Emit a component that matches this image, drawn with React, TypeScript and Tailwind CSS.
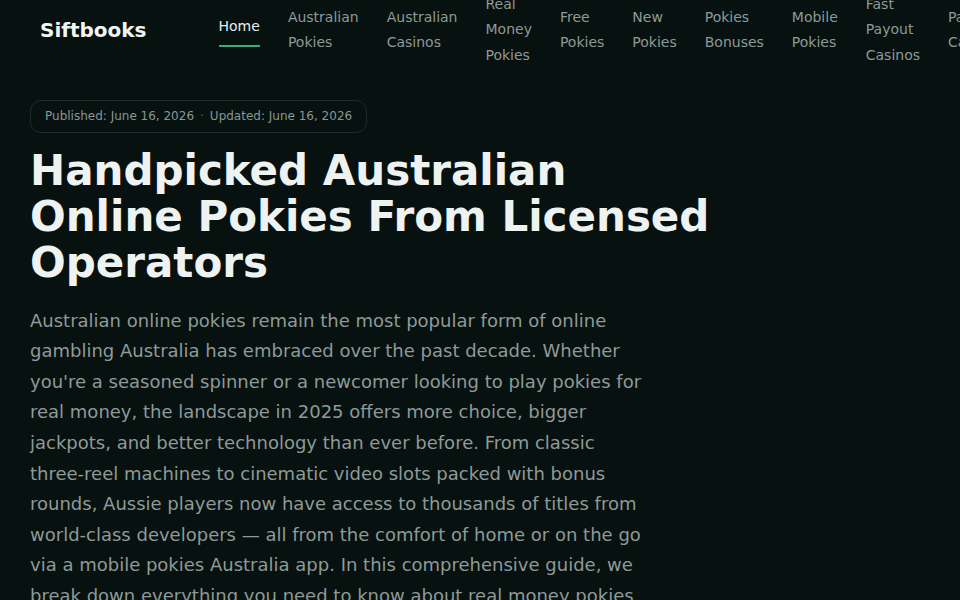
const navItems = [
  "Home",
  "Australian Pokies",
  "Australian Casinos",
  "Real Money Pokies",
  "Free Pokies",
  "New Pokies",
  "Pokies Bonuses",
  "Mobile Pokies",
  "Fast Payout Casinos",
  "PayID Casinos",
];

export default function App() {
  return (
    <div
      className="min-h-screen w-full overflow-hidden bg-[#071110] text-[#e8eeec]"
      style={{ fontFamily: '"DejaVu Sans", sans-serif' }}
    >
      <header className="flex h-[60px] items-center gap-[72px] px-10">
        <a className="shrink-0 text-[20px] font-bold text-[#f1f5f4]">Siftbooks</a>
        <nav className="flex items-center gap-7 text-[14px] leading-[25.4px]">
          {navItems.map((item, i) =>
            i === 0 ? (
              <a
                key={item}
                className="shrink-0 border-b-2 border-[#3daa7a] pb-[5px] pt-[1px] text-[#e8eeec]"
              >
                {item}
              </a>
            ) : (
              <a key={item} className="w-min shrink-0 text-[#8e9a97]">
                {item}
              </a>
            ),
          )}
        </nav>
      </header>

      <main className="px-[30px] pt-10">
        <div className="inline-flex items-center rounded-[11px] border border-[#1f2b29] px-[14px] py-[7px] text-[12px] leading-[17px] text-[#8a9693]">
          <span>Published: June 16, 2026</span>
          <span className="mx-[6px] text-[#4d5a57]">·</span>
          <span>Updated: June 16, 2026</span>
        </div>

        <h1 className="mt-[15px] max-w-[690px] text-[42px] font-bold leading-[1.1] text-[#eef3f2]">
          Handpicked Australian Online Pokies From Licensed Operators
        </h1>

        <p className="mt-[19px] max-w-[620px] text-[18px] leading-[1.7] text-[#8e9a97]">
          Australian online pokies remain the most popular form of online gambling Australia has
          embraced over the past decade. Whether you're a seasoned spinner or a newcomer looking to
          play pokies for real money, the landscape in 2025 offers more choice, bigger jackpots, and
          better technology than ever before. From classic three-reel machines to cinematic video
          slots packed with bonus rounds, Aussie players now have access to thousands of titles from
          world-class developers — all from the comfort of home or on the go via a mobile pokies
          Australia app. In this comprehensive guide, we break down everything you need to know about
          real money pokies online in Australia.
        </p>
      </main>
    </div>
  );
}
